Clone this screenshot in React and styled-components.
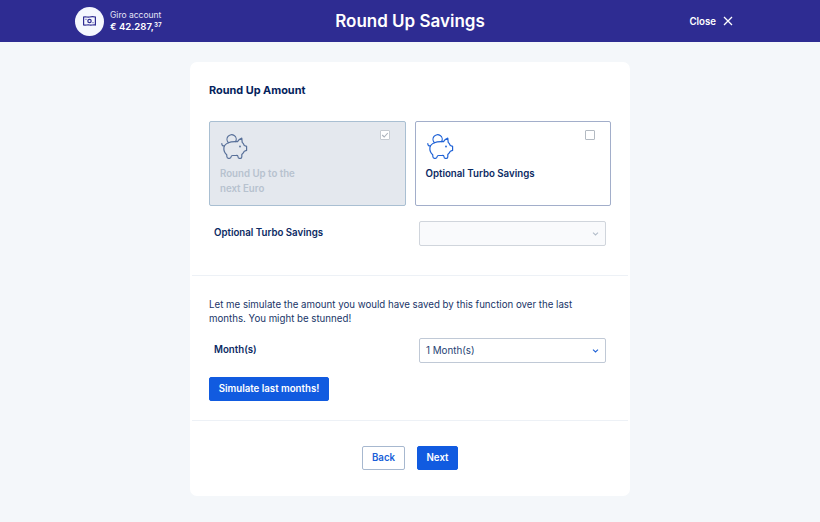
import React, { useState } from "react";
import styled, { createGlobalStyle } from "styled-components";

const GlobalStyle = createGlobalStyle`
  body {
    margin: 0;
    background-color: #f4f7fa;
    color: #0b2a63;
    font-family: Inter, sans-serif;
    font-size: 9.7px;
  }

  * {
    box-sizing: border-box;
  }
`;

const Page = styled.div`
  min-height: 522px;
`;

const TopBar = styled.header`
  background-color: #2e2c92;
  color: #fff;
  height: 42px;
  padding: 0 75px;
  display: grid;
  grid-template-columns: 1fr auto 1fr;
  align-items: center;
`;

const Account = styled.div`
  display: flex;
  align-items: center;
  gap: 6px;
`;

const AccountIcon = styled.div`
  width: 29px;
  height: 29px;
  border-radius: 50%;
  background-color: #f4f7fe;
  color: #2e2c92;
  display: flex;
  align-items: center;
  justify-content: center;
`;

const AccountName = styled.div`
  font-size: 8.5px;
  line-height: 11px;
  color: #e4e4f6;
`;

const Balance = styled.div`
  font-size: 9.6px;
  line-height: 12px;
  font-weight: 600;

  sup {
    font-size: 6.3px;
    line-height: 0;
    vertical-align: 3px;
  }
`;

const Title = styled.h1`
  margin: 0;
  font-size: 17px;
  line-height: 22px;
  font-weight: 600;
`;

const Close = styled.button`
  justify-self: end;
  display: flex;
  align-items: center;
  gap: 7px;
  margin-right: 12px;
  padding: 0;
  border: none;
  background: none;
  color: #fff;
  font: inherit;
  font-weight: 600;
`;

const Card = styled.main`
  width: 440px;
  height: 434px;
  margin: 20px auto 0;
  background-color: #fff;
  border-radius: 7px;
`;

const Section = styled.section`
  height: ${(props) => props.height}px;
  margin: 0 2px;
  padding: ${(props) => props.top}px 17px 0;
  border-bottom: 1px solid #edf1f6;
`;

const Heading = styled.h2`
  margin: 0;
  font-size: 10.9px;
  line-height: 16px;
  font-weight: 700;
  color: #04225c;
`;

const Options = styled.div`
  display: flex;
  gap: 9px;
  margin-top: 23px;
`;

const Option = styled.label`
  position: relative;
  width: 197px;
  height: 85px;
  padding: 11px 10px;
  border: 1px solid ${(props) => (props.disabled ? "#a9bfd2" : "#a2aeca")};
  border-radius: 2px;
  background-color: ${(props) => (props.disabled ? "#e4e8ee" : "#fff")};
  color: ${(props) => (props.disabled ? "#b7c2cf" : "#0b2a63")};
  font-weight: 600;
  line-height: 14.5px;

  svg.piggy {
    display: block;
    margin-left: 1px;
    color: ${(props) => (props.disabled ? "#587099" : "#1f62d6")};
  }
`;

const OptionText = styled.div`
  margin-top: 7px;
  max-width: ${(props) => (props.narrow ? "90px" : "none")};
`;

const Check = styled.span`
  position: absolute;
  top: 8px;
  right: 15px;
  width: 10px;
  height: 10px;
  border: 1px solid ${(props) => (props.disabled ? "#c6cbd1" : "#b3bac2")};
  border-radius: 1px;
  background-color: #fff;
  color: #aab1ba;
  display: flex;
  align-items: center;
  justify-content: center;
`;

const HiddenInput = styled.input`
  position: absolute;
  opacity: 0;
  margin: 0;
`;

const Field = styled.div`
  display: flex;
  justify-content: space-between;
  margin: ${(props) => props.top}px 5px 0;
`;

const FieldLabel = styled.div`
  font-weight: 600;
  line-height: 23px;
`;

const Select = styled.div`
  width: 187px;
  height: 25px;
  padding: 0 6px;
  border: 1px solid ${(props) => (props.disabled ? "#d0d5dc" : "#c0c9d6")};
  border-radius: 2px;
  background-color: ${(props) => (props.disabled ? "#f9fafc" : "#fff")};
  color: ${(props) => (props.disabled ? "#b3bdc9" : "#1f62d6")};
  display: flex;
  align-items: center;
  justify-content: space-between;

  span {
    color: #263f73;
    font-size: 9.8px;
  }
`;

const Text = styled.p`
  margin: 0;
  color: #193568;
  line-height: 14.5px;
`;

const Button = styled.button`
  height: 24px;
  width: ${(props) => props.width}px;
  padding: 0;
  border: 1px solid ${(props) => (props.outline ? "#a7b8cf" : "#115be0")};
  border-radius: 2px;
  background-color: ${(props) => (props.outline ? "#fff" : "#115be0")};
  color: ${(props) => (props.outline ? "#1a5fd9" : "#fff")};
  font: inherit;
  font-weight: 600;
`;

const SimulateButton = styled(Button)`
  display: block;
  margin-top: 14px;
`;

const Footer = styled.div`
  display: flex;
  justify-content: center;
  gap: 12px;
  padding-top: 25px;
`;

function MoneyIcon() {
  return (
    <svg width="13" height="10" viewBox="0 0 13 10" fill="none" stroke="currentColor">
      <path d="M.6 1C3 .4 4.500 1.500 6.500 1S10 .4 12.400 1V9C10 8.500 8.500 9.500 6.500 9S3 9.500 .6 9Z" strokeWidth="1.200" />
      <circle cx="6.500" cy="5" r="1.700" strokeWidth="1.200" />
      <path d="M2.500 3.300h1M9.500 6.700h1" />
    </svg>
  );
}

function CloseIcon() {
  return (
    <svg width="10" height="10" viewBox="0 0 10 10" fill="none" stroke="currentColor" strokeWidth="1.300">
      <path d="M1 1L9 9M9 1L1 9" />
    </svg>
  );
}

function PiggyIcon() {
  return (
    <svg
      className="piggy"
      width="28"
      height="27"
      viewBox="0 0 28 27"
      fill="none"
      stroke="currentColor"
      strokeWidth="1.200"
      strokeLinecap="round"
      strokeLinejoin="round"
    >
      <path d="M7.500 9.700A4.600 4.600 0 1 1 14.600 8.600" />
      <path d="M.8 10.500C.8 12.300 1.800 13.200 3.300 12.900" />
      <path d="M7.500 9.700C10 8.300 13 8.400 16.500 8.600C17.500 6.800 19.100 5.700 20.800 5.200L21.200 9.400C22.200 10.200 22.800 11.300 23.300 12.500L25.600 13.400V17.400L23.300 18.300C22.700 19.800 21.800 20.700 20.800 21.400V23.800C20.800 24.800 20.400 25.400 19.500 25.400H18.200C17.300 25.400 17 24.700 16.900 23.300C16.800 22.500 16 22.400 15 22.500H11.600C10.500 22.500 10.200 22.900 10.100 23.800C10 24.900 9.500 25.400 8.500 25.400H7.400C6.400 25.400 6 24.800 5.900 23.800L5.700 21.700C3.600 19.800 2.600 17.500 2.900 14.600C3.300 12.300 4.800 10.700 7.500 9.700Z" />
      <circle cx="19" cy="13.500" r=".9" fill="currentColor" stroke="none" />
    </svg>
  );
}

function ChevronIcon() {
  return (
    <svg width="7" height="5" viewBox="0 0 7 5" fill="none" stroke="currentColor" strokeWidth="1.100">
      <path d="M1 1.700L3.500 4L6 1.700" />
    </svg>
  );
}

function CheckIcon() {
  return (
    <svg width="8" height="8" viewBox="0 0 8 8" fill="none" stroke="currentColor" strokeWidth="1.100">
      <path d="M1.200 4L3.200 6L6.800 2" />
    </svg>
  );
}

export default function App() {
  const [turbo, setTurbo] = useState(false);

  return (
    <Page>
      <GlobalStyle />
      <TopBar>
        <Account>
          <AccountIcon>
            <MoneyIcon />
          </AccountIcon>
          <div>
            <AccountName>Giro account</AccountName>
            <Balance>
              € 42.287,<sup>37</sup>
            </Balance>
          </div>
        </Account>
        <Title>Round Up Savings</Title>
        <Close>
          Close
          <CloseIcon />
        </Close>
      </TopBar>

      <Card>
        <Section height={213.5} top={20}>
          <Heading>Round Up Amount</Heading>
          <Options>
            <Option disabled>
              <PiggyIcon />
              <OptionText narrow>Round Up to the next Euro</OptionText>
              <Check disabled>
                <CheckIcon />
              </Check>
            </Option>
            <Option>
              <HiddenInput type="checkbox" checked={turbo} onChange={() => setTurbo((s) => !s)} />
              <PiggyIcon />
              <OptionText>Optional Turbo Savings</OptionText>
              <Check>{turbo && <CheckIcon />}</Check>
            </Option>
          </Options>
          <Field top={15}>
            <FieldLabel>Optional Turbo Savings</FieldLabel>
            <Select disabled>
              <span />
              <ChevronIcon />
            </Select>
          </Field>
        </Section>

        <Section height={145} top={22}>
          <Text>
            Let me simulate the amount you would have saved by this function over the last months. You might be
            stunned!
          </Text>
          <Field top={11}>
            <FieldLabel>Month(s)</FieldLabel>
            <Select>
              <span>1 Month(s)</span>
              <ChevronIcon />
            </Select>
          </Field>
          <SimulateButton width={120}>Simulate last months!</SimulateButton>
        </Section>

        <Footer>
          <Button outline width={43}>
            Back
          </Button>
          <Button width={41}>Next</Button>
        </Footer>
      </Card>
    </Page>
  );
}
